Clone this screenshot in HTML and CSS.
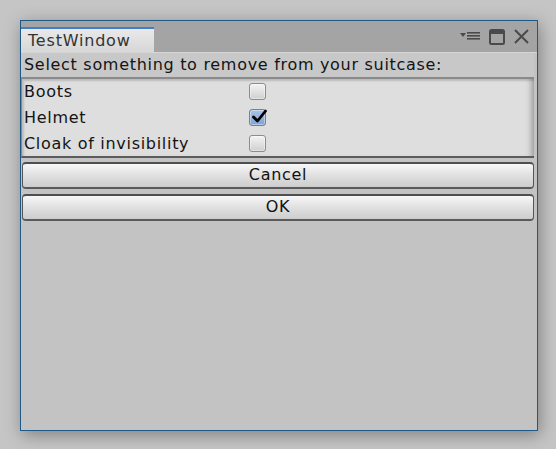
FILE: index.html
```html
<!DOCTYPE html>
<html>
<head>
<meta charset="utf-8">
<link rel="stylesheet" href="styles.css">
</head>
<body>
<div class="window">
  <div class="titlebar">
    <div class="tab">TestWindow</div>
    <div class="controls">
      <svg class="ico-menu" width="20" height="10" viewBox="0 0 20 10">
        <polygon points="0,1 6,1 3,5" fill="#4a4a4a"/>
        <rect x="7" y="0" width="13" height="1.6" fill="#4a4a4a"/>
        <rect x="7" y="3" width="13" height="1.6" fill="#4a4a4a"/>
        <rect x="7" y="6" width="13" height="1.6" fill="#4a4a4a"/>
      </svg>
      <svg class="ico-max" width="16" height="16" viewBox="0 0 16 16">
        <rect x="1" y="1" width="14" height="14" rx="1.5" fill="none" stroke="#4a4a4a" stroke-width="2"/>
        <rect x="1" y="1" width="14" height="4" fill="#4a4a4a"/>
      </svg>
      <svg class="ico-close" width="15" height="15" viewBox="0 0 15 15">
        <path d="M1 1 L14 14 M14 1 L1 14" stroke="#4a4a4a" stroke-width="2" fill="none"/>
      </svg>
    </div>
  </div>
  <div class="content">
    <div class="prompt">Select something to remove from your suitcase:</div>
    <div class="list">
      <div class="row"><span class="label">Boots</span><span class="check"></span></div>
      <div class="row"><span class="label">Helmet</span><span class="check on"><svg width="17" height="16" viewBox="0 0 17 16"><path d="M2.5 9 L6.5 13 L14.5 3" stroke="#000" stroke-width="2.8" fill="none" stroke-linecap="round" stroke-linejoin="round"/></svg></span></div>
      <div class="row"><span class="label">Cloak of invisibility</span><span class="check"></span></div>
    </div>
    <div class="btn btn-first">Cancel</div>
    <div class="btn">OK</div>
  </div>
</div>
</body>
</html>
```

FILE: styles.css
```css
html, body {
  margin: 0;
  padding: 0;
}
body {
  background: #c5c5c5;
  font-family: "DejaVu Sans", Verdana, sans-serif;
  font-size: 16px;
  letter-spacing: 0.7px;
  color: #141414;
  padding: 20px 0 0 20px;
  height: 449px;
  box-sizing: border-box;
  overflow: hidden;
}
.window {
  width: 518px;
  height: 411px;
  box-sizing: border-box;
  border: 1px solid #1d5887;
  background: #c2c2c2;
  box-shadow: 2px 4px 16px rgba(0,0,0,0.35);
  display: flex;
  flex-direction: column;
}
.titlebar {
  height: 31px;
  background: #a4a4a4;
  display: flex;
  align-items: flex-end;
  flex: none;
}
.tab {
  width: 126px;
  height: 23px;
  border-top: 2px solid #3f7fca;
  background: linear-gradient(#e9e9e9, #d7d7d7);
  color: #333;
  padding-left: 7px;
  box-sizing: content-box;
  line-height: 24px;
  font-size: 16px;
  letter-spacing: 0.8px;
}
.controls {
  margin-left: auto;
  align-self: stretch;
  display: flex;
  align-items: flex-start;
  padding-top: 8px;
  padding-right: 8px;
}
.ico-menu {
  margin-top: 3px;
  margin-right: 9px;
}
.ico-max {
  margin-right: 9px;
}
.content {
  flex: 1;
  border-top: 1px solid #d6d6d6;
  background: #c3c3c3;
  padding: 0 3px 0 0;
  display: flex;
  flex-direction: column;
}
.prompt {
  height: 24px;
  line-height: 24px;
  padding-left: 3px;
  background: #c8c8c8;
}
.list {
  height: 81px;
  box-sizing: border-box;
  background: #dedede;
  border-top: 2px solid #8a8a8a;
  border-left: 1px solid #8a8a8a;
  border-bottom: 2px solid #5c5c5c;
  box-shadow: inset -7px 0 6px -5px rgba(0,0,0,0.35), inset 2px 2px 2px rgba(0,0,0,0.15);
  display: flex;
  flex-direction: column;
}
.row {
  height: 26px;
  display: flex;
  align-items: center;
  padding-left: 2px;
}
.row:first-child {
  height: 25px;
}
.label {
  width: 225px;
}
.check {
  width: 15px;
  height: 15px;
  border: 1px solid #8c8c8c;
  border-radius: 3px;
  background: linear-gradient(#f4f4f4, #cfcfcf);
  box-shadow: inset 0 0 0 1px rgba(255,255,255,0.4);
  display: flex;
  align-items: center;
  justify-content: center;
  overflow: visible;
}
.check.on {
  background: linear-gradient(#a9c3e8, #7ea3d6);
  border-color: #7f7f7f;
}
.check svg {
  flex: none;
  margin-top: -3px;
  margin-left: 3px;
}
.btn {
  margin: 5px 0 0 1px;
  height: 27px;
  box-sizing: border-box;
  border: 1px solid #555;
  border-top: 2px solid #4e4e4e;
  border-bottom: 2px solid #5a5a5a;
  border-radius: 4px;
  background: linear-gradient(#f7f7f7, #e0e0e0 50%, #cdcdcd);
  text-align: center;
  line-height: 22px;
  color: #111;
}
.btn-first {
  margin-top: 4px;
}
```
